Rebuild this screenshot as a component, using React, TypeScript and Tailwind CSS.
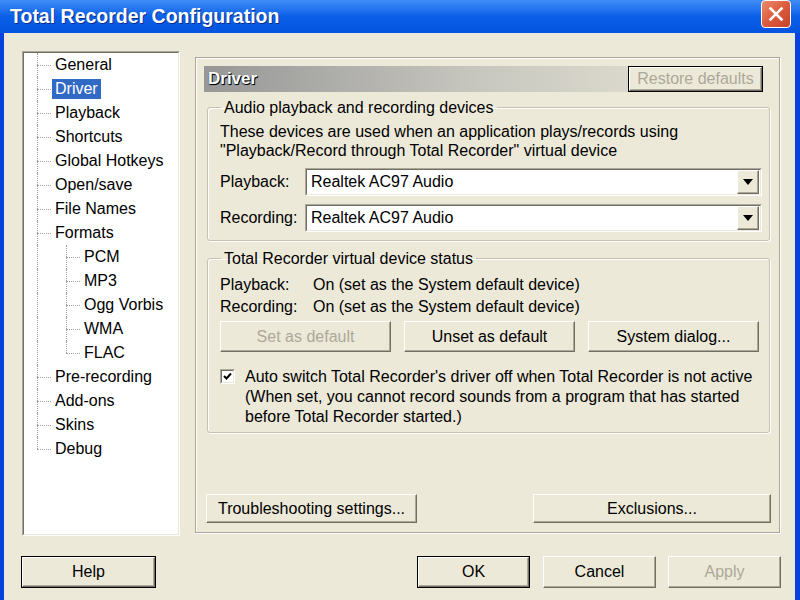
import React from 'react';
import clsx from 'clsx';

type TreeItem = { label: string; depth: 1 | 2; last?: boolean; selected?: boolean };

const treeItems: TreeItem[] = [
  { label: 'General', depth: 1 },
  { label: 'Driver', depth: 1, selected: true },
  { label: 'Playback', depth: 1 },
  { label: 'Shortcuts', depth: 1 },
  { label: 'Global Hotkeys', depth: 1 },
  { label: 'Open/save', depth: 1 },
  { label: 'File Names', depth: 1 },
  { label: 'Formats', depth: 1 },
  { label: 'PCM', depth: 2 },
  { label: 'MP3', depth: 2 },
  { label: 'Ogg Vorbis', depth: 2 },
  { label: 'WMA', depth: 2 },
  { label: 'FLAC', depth: 2, last: true },
  { label: 'Pre-recording', depth: 1 },
  { label: 'Add-ons', depth: 1 },
  { label: 'Skins', depth: 1 },
  { label: 'Debug', depth: 1, last: true },
];

// classic 3d push button
const Button: React.FC<{
  label: string;
  className?: string;
  disabled?: boolean;
  isDefault?: boolean;
}> = ({ label, className, disabled = false, isDefault = false }) => (
  <div className={clsx('flex bg-[#ece9d8]', isDefault && 'border border-black', className)}>
    <div className="flex-1 flex items-center justify-center border-t border-l border-white border-r border-b border-r-[#716f64] border-b-[#716f64] shadow-[inset_-1px_-1px_0_#aca899]">
      <span className={clsx('text-[16px] leading-none', disabled ? 'text-[#aca899]' : 'text-black')}>
        {label}
      </span>
    </div>
  </div>
);

const Combo: React.FC<{ value: string }> = ({ value }) => (
  <div className="flex-1 h-[28px] flex border-t border-l border-[#aca899] border-r border-b border-r-white border-b-white">
    <div className="flex-1 flex items-center bg-white border-t border-l border-[#716f64] border-r border-b border-r-[#ece9d8] border-b-[#ece9d8] pr-[1px]">
      <span className="flex-1 pl-[4px] text-[16px] text-black">{value}</span>
      <div className="w-[22px] h-[24px] flex items-center justify-center bg-[#ece9d8] border-t border-l border-white border-r border-b border-r-[#716f64] border-b-[#716f64] shadow-[inset_-1px_-1px_0_#aca899]">
        <svg width="10" height="6" viewBox="0 0 10 6">
          <path d="M0 0h10L5 6z" fill="#000" />
        </svg>
      </div>
    </div>
  </div>
);

const Group: React.FC<{ title: string; className?: string; children: React.ReactNode }> = ({
  title,
  className,
  children,
}) => (
  <fieldset
    className={clsx(
      'border border-[#c5c2b2] rounded-[3px] shadow-[inset_1px_1px_0_#fff,1px_1px_0_#fff]',
      className
    )}
  >
    <legend className="ml-[1px] px-[3px] text-[16px] leading-[19px] text-black">{title}</legend>
    {children}
  </fieldset>
);

const TreeRow: React.FC<{ item: TreeItem }> = ({ item }) => (
  <div className="flex h-[24px]">
    {item.depth === 2 && (
      // parent connector keeps running past the sub items
      <div className="w-[29px] h-full border-l border-dotted border-[#a0a0a0]" />
    )}
    <div className="w-[18px] h-full flex flex-col">
      <div className="h-[12px] border-l border-dotted border-[#a0a0a0]" />
      <div
        className={clsx(
          'h-[12px] w-[14px] border-t border-dotted border-[#a0a0a0]',
          !item.last && 'border-l'
        )}
      />
    </div>
    <div className="flex items-center">
      <span
        className={clsx(
          'px-[3px] -ml-[3px] h-[20px] leading-[20px] text-[16px]',
          item.selected ? 'bg-[#316ac5] text-white' : 'text-black'
        )}
      >
        {item.label}
      </span>
    </div>
  </div>
);

export default function App() {
  return (
    <div className="w-[800px] h-[600px] flex flex-col bg-[#0842dc] overflow-hidden font-['Liberation_Sans',Arial,sans-serif]">
      {/* title bar */}
      <div className="h-[33px] flex items-start justify-between bg-gradient-to-b from-[#3d8cf5] via-[#0a5fe8] to-[#0553de]">
        <span className="pl-[10px] pt-[2px] text-[19.5px] font-bold text-white [text-shadow:1px_1px_0_#0a2f8c]">
          Total Recorder Configuration
        </span>
        <div className="mr-[9px] w-[30px] h-[28px] flex items-center justify-center rounded-[4px] border border-white bg-gradient-to-br from-[#ea8c6c] via-[#dd5a3c] to-[#c4432a]">
          <svg width="16" height="16" viewBox="0 0 16 16">
            <path d="M2.5 2.5l11 11M13.5 2.5l-11 11" stroke="#fff" strokeWidth="2.6" strokeLinecap="square" />
          </svg>
        </div>
      </div>

      {/* dialog body */}
      <div className="flex-1 flex flex-col ml-[4px] mr-[5px] bg-[#ece9d8] pt-[18px]">
        <div className="flex h-[485px]">
          {/* page tree */}
          <div className="ml-[18px] w-[158px] h-full bg-white border-t border-l border-[#aca899] border-r border-b border-r-white border-b-white">
            <div className="h-full border-t border-l border-[#716f64] border-r border-b border-r-[#ece9d8] border-b-[#ece9d8] pl-[13px]">
              {treeItems.map((item) => (
                <TreeRow key={item.label} item={item} />
              ))}
            </div>
          </div>

          {/* driver page */}
          <div className="ml-[15px] mt-[6px] w-[585px] h-[476px] flex flex-col border border-[#aca899] shadow-[inset_1px_1px_0_#fff,1px_1px_0_#fff] pl-[8px] pr-[9px] pt-[8px] pb-[9px]">
            <div className="h-[26px] flex items-center justify-between bg-gradient-to-r from-[#979797] via-[#c9c8c0] to-[#ece9d8]">
              <span className="pl-[4px] text-[17px] font-bold text-white [text-shadow:1px_1px_0_#000,0_1px_1px_#333]">
                Driver
              </span>
              <Button label="Restore defaults" className="w-[135px] h-[26px] mr-[7px]" disabled isDefault />
            </div>

            <Group title="Audio playback and recording devices" className="ml-[3px] mt-[6px] pl-[12px] pr-[7px] pb-[8px]">
              <div className="pt-[5px] text-[16px] leading-[19px] text-black">
                <div>These devices are used when an application plays/records using</div>
                <div>"Playback/Record through Total Recorder" virtual device</div>
              </div>
              <div className="mt-[8px] flex items-center">
                <span className="w-[85px] text-[16px] text-black">Playback:</span>
                <Combo value="Realtek AC97 Audio" />
              </div>
              <div className="mt-[8px] flex items-center">
                <span className="w-[85px] text-[16px] text-black">Recording:</span>
                <Combo value="Realtek AC97 Audio" />
              </div>
            </Group>

            <Group title="Total Recorder virtual device status" className="ml-[3px] mt-[8px] pl-[12px] pr-[10px] pb-[5px]">
              <div className="pt-[6px] text-[16px] text-black">
                <div className="flex h-[22px] items-center">
                  <span className="w-[93px]">Playback:</span>
                  <span>On (set as the System default device)</span>
                </div>
                <div className="flex h-[22px] items-center">
                  <span className="w-[93px]">Recording:</span>
                  <span>On (set as the System default device)</span>
                </div>
              </div>
              <div className="mt-[3px] flex justify-between">
                <Button label="Set as default" className="w-[171px] h-[31px]" disabled />
                <Button label="Unset as default" className="w-[171px] h-[31px]" />
                <Button label="System dialog..." className="w-[171px] h-[31px]" />
              </div>
              <div className="mt-[15px] flex items-start">
                <div className="mt-[2px] w-[15px] h-[15px] flex bg-white border-t border-l border-[#aca899] border-r border-b border-r-white border-b-white">
                  <div className="flex-1 flex items-center justify-center border-t border-l border-[#716f64] border-r border-b border-r-[#ece9d8] border-b-[#ece9d8]">
                    <svg width="9" height="9" viewBox="0 0 9 9">
                      <path d="M1 4l2.5 2.5L8 1.5" stroke="#000" strokeWidth="2" fill="none" />
                    </svg>
                  </div>
                </div>
                <div className="ml-[10px] text-[16px] leading-[20px] text-black">
                  <div>Auto switch Total Recorder's driver off when Total Recorder is not active</div>
                  <div>(When set, you cannot record sounds from a program that has started</div>
                  <div>before Total Recorder started.)</div>
                </div>
              </div>
            </Group>

            <div className="flex-1" />
            <div className="flex justify-between ml-[2px] -mr-[1px]">
              <Button label="Troubleshooting settings..." className="w-[211px] h-[29px]" />
              <Button label="Exclusions..." className="w-[238px] h-[29px]" />
            </div>
          </div>
        </div>

        {/* dialog buttons */}
        <div className="mt-[20px] flex">
          <Button label="Help" className="ml-[17px] w-[135px] h-[32px]" isDefault />
          <div className="flex-1" />
          <Button label="OK" className="w-[113px] h-[32px]" isDefault />
          <Button label="Cancel" className="ml-[13px] w-[113px] h-[32px]" />
          <Button label="Apply" className="ml-[12px] mr-[14px] w-[113px] h-[32px]" disabled />
        </div>
      </div>
    </div>
  );
}
